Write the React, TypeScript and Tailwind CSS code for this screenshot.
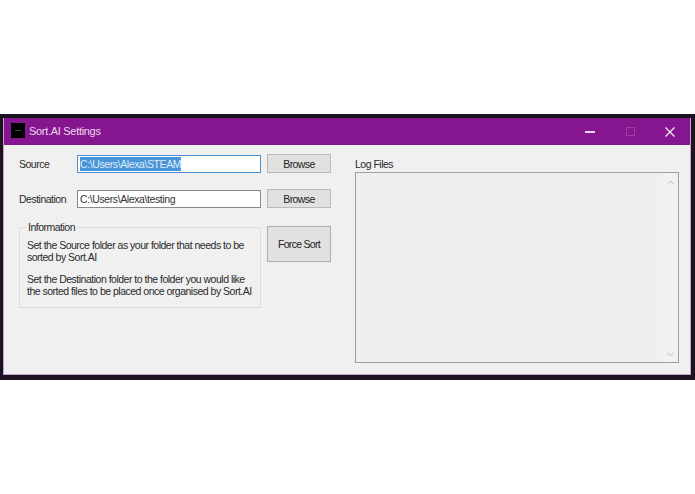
import { ChevronDown, ChevronUp } from "lucide-react"

const font = "font-['Liberation_Sans',Arial,sans-serif]"

const BrowseButton = () => (
    <button className="h-[19px] w-[64px] border border-[#b9b9b9] bg-[#e1e1e1] pt-[2px] text-[10.5px] tracking-[-0.6px] text-[#222]">Browse</button>
)

const PathInput = ({ value, active }: { value: string, active?: boolean }) => (
    <div className={`flex h-[18px] w-[184px] items-center border bg-white pl-[2px] text-[10.5px] tracking-[-0.4px] text-[#333] ${active ? "border-[#4a90cf]" : "border-[#8a8a8a]"}`}>
        <span className={`pt-px leading-[13px] ${active ? "bg-[#4a94d8] text-[#dcecfa]" : ""}`}>{value}</span>
    </div>
)

const App = () => {
    return (
        <div className={`${font} h-[494px] w-[695px] overflow-hidden bg-white pt-[114px]`}>
            <div className="h-[266px] bg-[#1b1420] pb-[5px] pl-[3px] pr-[4px] pt-[4px]">
                <div className="flex h-[257px] flex-col border-x border-b border-[#c79fca] bg-[#f0f0f0]">
                    <div className="flex h-[27px] shrink-0 items-center bg-[#86168f] pl-[7px] text-white">
                        <div className="mb-[2px] flex h-[15px] w-[14px] items-center justify-center bg-black">
                            <div className="h-px w-[6px] bg-[#1c5c2c]" />
                        </div>
                        <span className="ml-[4px] text-[11px] tracking-[-0.3px] text-[#eadcec]">Sort.AI Settings</span>
                        <div className="ml-auto flex items-center">
                            <div className="h-[2px] w-[10px] bg-[#e9d5eb]" />
                            <div className="ml-[31px] h-[9px] w-[9px] border border-[#9a3fa2]" />
                            <svg className="ml-[30px] mr-[15px]" width="10" height="10" viewBox="0 0 10 10">
                                <path d="M0.5 0.5 L9.5 9.5 M9.5 0.5 L0.5 9.5" stroke="#f3e8f4" strokeWidth="1.3" />
                            </svg>
                        </div>
                    </div>
                    <div className="flex flex-1 pl-[15px] pr-[11px] pt-[9px] text-[10.5px] tracking-[-0.5px] text-[#2a2a2a]">
                        <div className="w-[312px]">
                            <div className="flex items-center">
                                <span className="w-[58px] pt-[2px]">Source</span>
                                <PathInput value="C:\Users\Alexa\STEAM" active />
                                <div className="ml-[6px]"><BrowseButton /></div>
                            </div>
                            <div className="mt-[16px] flex items-center">
                                <span className="w-[58px] whitespace-nowrap pt-[2px]">Destination</span>
                                <PathInput value="C:\Users\Alexa\testing" />
                                <div className="ml-[6px]"><BrowseButton /></div>
                            </div>
                            <div className="mt-[18px] flex items-start">
                                <div className="relative mt-px h-[81px] w-[242px] whitespace-nowrap border border-[#dcdcdc] px-[7px] pt-[11px] leading-[12px]">
                                    <span className="absolute -top-[7px] left-[6px] bg-[#f0f0f0] px-[2px]">Information</span>
                                    <p>Set the Source folder as your folder that needs to be<br />sorted by Sort.AI</p>
                                    <p className="mt-[10px]">Set the Destination folder to the folder you would like<br />the sorted files to be placed once organised by Sort.AI</p>
                                </div>
                                <button className="ml-[6px] h-[36px] w-[64px] border border-[#adadad] bg-[#e1e1e1] pt-px text-[10.5px] tracking-[-0.7px] text-[#222]">Force Sort</button>
                            </div>
                        </div>
                        <div className="ml-[24px] flex flex-1 flex-col pt-[4px]">
                            <span className="leading-[13px]">Log Files</span>
                            <div className="mt-[1px] flex h-[191px] justify-end border border-[#a0a0a0] bg-[#efefef]">
                                <div className="flex w-[16px] flex-col items-center justify-between bg-[#f1f1f1] pb-[2px] pt-[4px] text-[#b5b5b5]">
                                    <ChevronUp size={11} strokeWidth={2} />
                                    <ChevronDown size={11} strokeWidth={2} />
                                </div>
                            </div>
                        </div>
                    </div>
                </div>
            </div>
        </div>
    )
}

export default App
